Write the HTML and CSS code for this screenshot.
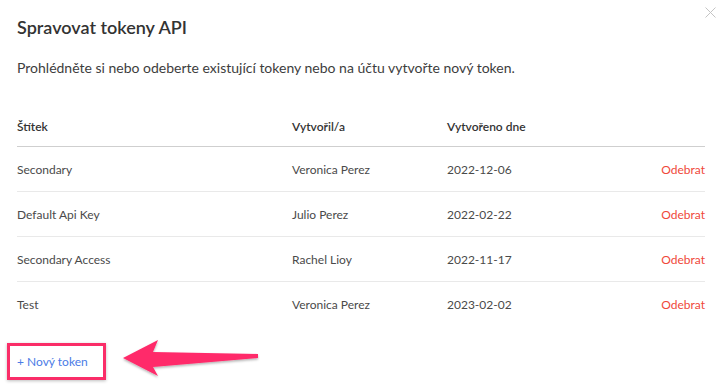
FILE: index.html
```html
<!DOCTYPE html>
<html lang="cs">
<head>
<meta charset="utf-8">
<link rel="stylesheet" href="styles.css">
</head>
<body>
<div class="modal">
  <button class="close" aria-label="Zavřít">
    <svg width="11" height="11" viewBox="0 0 11 11"><path d="M0.5 0.5L10.5 10.5M10.5 0.5L0.5 10.5" stroke="#c4c4c4" stroke-width="1"/></svg>
  </button>
  <h1 class="title">Spravovat tokeny API</h1>
  <p class="desc">Prohlédněte si nebo odeberte existující tokeny nebo na účtu vytvořte nový token.</p>
  <div class="table">
    <div class="row head">
      <span>Štítek</span><span>Vytvořil/a</span><span>Vytvořeno dne</span><span></span>
    </div>
    <div class="row">
      <span>Secondary</span><span>Veronica Perez</span><span>2022-12-06</span><a class="remove">Odebrat</a>
    </div>
    <div class="row">
      <span>Default Api Key</span><span>Julio Perez</span><span>2022-02-22</span><a class="remove">Odebrat</a>
    </div>
    <div class="row">
      <span>Secondary Access</span><span>Rachel Lioy</span><span>2022-11-17</span><a class="remove">Odebrat</a>
    </div>
    <div class="row last">
      <span>Test</span><span>Veronica Perez</span><span>2023-02-02</span><a class="remove">Odebrat</a>
    </div>
  </div>
  <div class="footer">
    <div class="highlight"><a class="new">+ Nový token</a></div>
    <svg class="arrow" width="145" height="44" viewBox="0 0 145 44">
      <defs>
        <filter id="sh" x="-10%" y="-20%" width="120%" height="150%">
          <feDropShadow dx="0" dy="1.5" stdDeviation="1" flood-color="#000" flood-opacity="0.3"/>
        </filter>
      </defs>
      <polygon filter="url(#sh)" fill="#ff2a6a" points="4,21 39,3 34,15 139,17 139,21 34,30 39,39"/>
    </svg>
  </div>
</div>
</body>
</html>
```
FILE: styles.css
```css
* { box-sizing: border-box; }
html, body { margin: 0; padding: 0; background: #fff; }
body {
  font-family: Lato, "Noto Sans", sans-serif;
  color: #333;
  width: 725px;
  height: 388px;
  overflow: hidden;
}
.modal {
  position: relative;
  padding: 14px 20px 0 17px;
}
.close {
  position: absolute;
  top: 7px;
  right: 9px;
  border: 0;
  background: none;
  padding: 0;
  line-height: 0;
}
.title {
  margin: 0;
  font-size: 18px;
  font-weight: 600;
  line-height: 26px;
  color: #333;
}
.desc {
  margin: 18px 0 0;
  font-size: 14px;
  line-height: 20px;
  color: #3d3d3d;
}
.table {
  margin-top: 29px;
  font-size: 12px;
  color: #4a4a4a;
}
.row {
  display: grid;
  grid-template-columns: 275px 155px 1fr 80px;
  align-items: center;
  height: 45px;
  border-bottom: 1px solid #e9e9e9;
}
.row.head {
  height: 40px;
  font-weight: 600;
  color: #333;
  border-bottom-color: #cfcfcf;
}
.row.last { border-bottom: 0; height: 44px; }
.remove {
  justify-self: end;
  color: #f0483a;
}
.footer {
  display: flex;
  align-items: center;
  margin-left: -10px;
  margin-top: 15px;
}
.highlight {
  width: 99px;
  height: 37px;
  border: 3px solid #fa2d68;
  box-shadow: 0 1px 3px rgba(0,0,0,0.25);
  display: flex;
  align-items: center;
  padding-left: 7px;
}
.new {
  font-size: 12px;
  color: #4a7be6;
}
.arrow {
  margin-left: 13px;
  margin-top: -4px;
}
```
